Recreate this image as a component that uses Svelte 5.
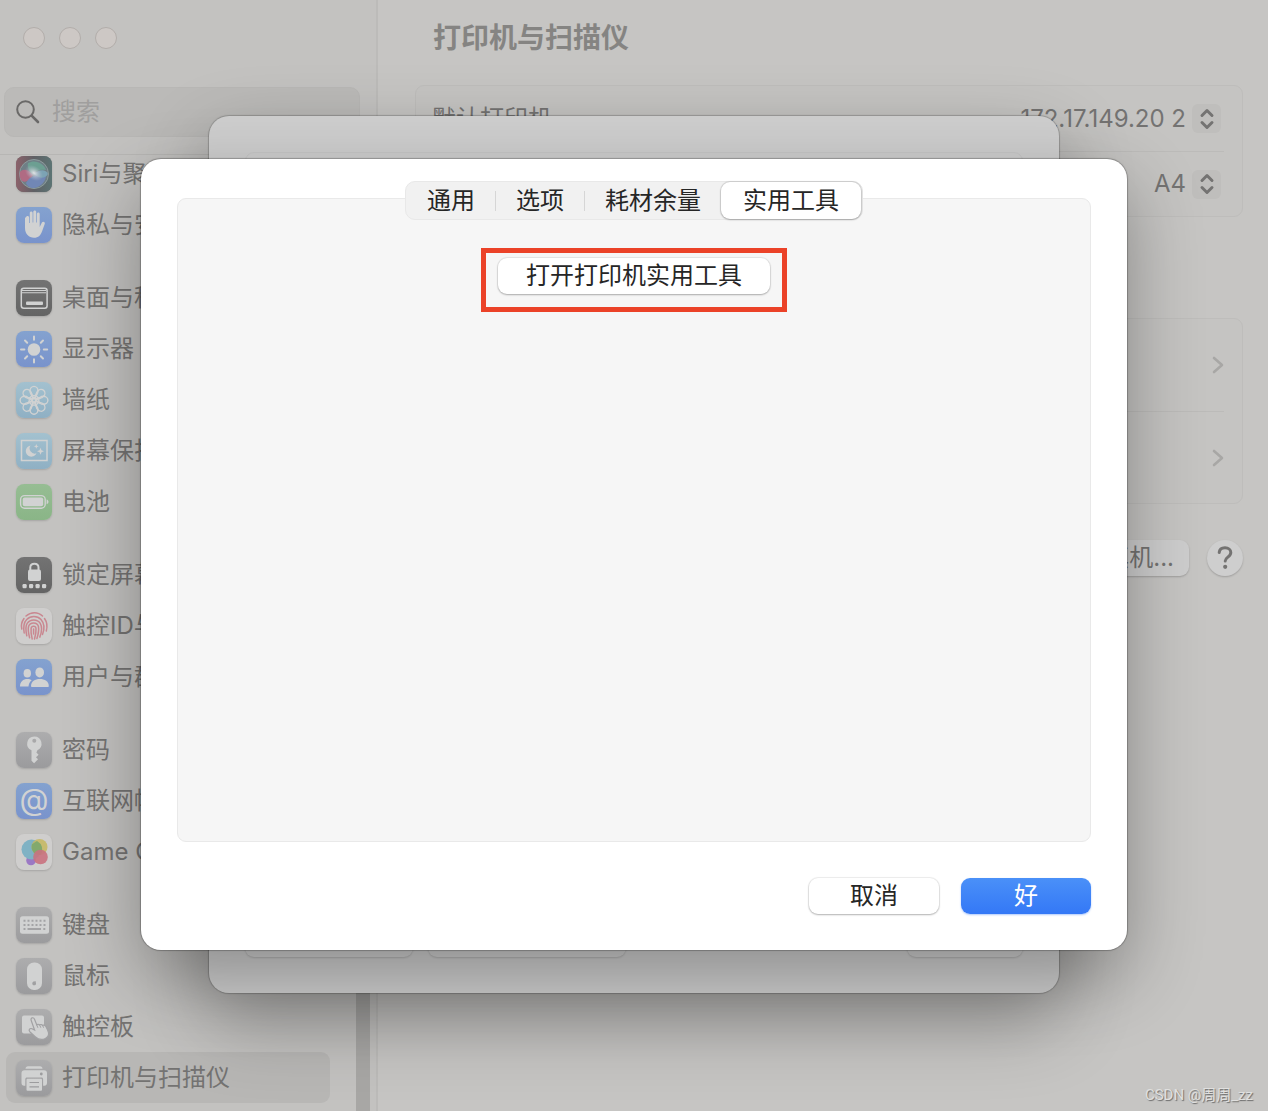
<script lang="ts">
    type Item = { label: string; icon: string; tone: string };

    const icons: Record<string, string> = {
        siri: `<defs>
                <linearGradient id="siri-bg" x1="0" y1="0" x2="1" y2="0"><stop offset="0" stop-color="#8c626b"/><stop offset="0.5" stop-color="#5f6064"/><stop offset="1" stop-color="#5c7474"/></linearGradient>
                <radialGradient id="siri-core"><stop offset="0" stop-color="#e2e4e6"/><stop offset="1" stop-color="#a9b4c4" stop-opacity="0"/></radialGradient>
            </defs>
            <rect width="36" height="36" rx="8" fill="url(#siri-bg)"/>
            <circle cx="18" cy="18" r="14.5" fill="#6f7f86" stroke="#8c9b9c"/>
            <path d="M4 16c4-5 10-1 13 3-3 6-8 8-11 6-2-2-3-6-2-9z" fill="#b06b83"/>
            <path d="M12 7c7-4 16 0 18 7-6-1-10 1-13 4-4-2-6-7-5-11z" fill="#6c9f92"/>
            <path d="M10 27c3-6 8-9 20-7-1 7-6 11-12 12-4 0-7-2-8-5z" fill="#7187b5"/>
            <path d="M18 18c5-5 12-5 14 0-3 5-9 5-14 0z" fill="#7ca3b4"/>
            <ellipse cx="18" cy="17" rx="10" ry="7" fill="url(#siri-core)" transform="rotate(35 18 17)"/>`,
        hand: `<path d="M9 10.500v10.500c0 6 4 9.700 9 9.700 4.600 0 6.800-2.700 8.100-6.500l2.700-7.500c.5-1.800-1.900-2.900-2.900-1.100l-2.200 4.300V7c0-2-2.800-2-2.800 0v8.500h-.7V5c0-2-2.900-2-2.900 0v10.500h-.7V6c0-2-2.800-2-2.800 0v10h-.7v-5.500c0-2-3.100-2-3.100 0z" fill="currentColor"/>`,
        desktop: `<rect x="5.300" y="8.200" width="25.800" height="20" rx="2.500" fill="none" stroke="currentColor" stroke-width="1.500"/><path d="M6 10h24v1H6zM6 12.200h24v1H6z" fill="currentColor"/><rect x="10" y="21.500" width="17" height="3.500" rx="1" fill="currentColor"/>`,
        sun: `<circle cx="18" cy="18.500" r="6.300" fill="currentColor"/><path d="M18 5.500v3.200M18 28.300v3.200M5 18.500h3.400M27.800 18.500h3.400M9 9.500l2.200 2.200M24.800 25.300l2.200 2.200M27 9.500l-2.200 2.200M11.200 25.300L9 27.500" stroke="currentColor" stroke-width="2" stroke-linecap="round"/>`,
        flower: `<g fill="none" stroke="currentColor" stroke-width="1.400">${[0, 45, 90, 135, 180, 225, 270, 315]
            .map((a) => `<g transform="rotate(${a} 18 18.300)"><ellipse cx="18" cy="9" rx="4" ry="4.600"/><path d="M15 12l3 4.500 3-4.500"/></g>`)
            .join('')}<circle cx="18" cy="18.300" r="2"/></g>`,
        saver: `<rect x="5.500" y="7.500" width="25.500" height="20" fill="none" stroke="currentColor" stroke-width="1.500"/><path d="M14.500 12.500a5.600 5.600 0 1 0 6 7.800 5.200 5.200 0 0 1-6-7.800z" fill="currentColor"/><path d="M20.300 11l.7 1.700 1.700.7-1.700.7-.7 1.700-.7-1.700-1.700-.7 1.700-.7zM24.500 14.800l1 2.500 2.500 1-2.500 1-1 2.500-1-2.500-2.500-1 2.500-1z" fill="currentColor"/>`,
        battery: `<rect x="4.600" y="11.600" width="24.600" height="12.600" rx="4" fill="none" stroke="currentColor" stroke-width="1.400"/><rect x="6.700" y="13.600" width="20.500" height="8.600" rx="2" fill="currentColor"/><path d="M30.600 15.600c2.500.6 2.500 4 0 4.600z" fill="currentColor"/>`,
        lock: `<rect x="12" y="12.500" width="13" height="11.500" rx="2" fill="currentColor"/><path d="M14.300 13v-2.500c0-5 8.200-5 8.200 0V13" fill="none" stroke="currentColor" stroke-width="2"/><g fill="currentColor"><rect x="6.500" y="27" width="4.200" height="4.200" rx="1.200"/><rect x="13" y="27" width="4.200" height="4.200" rx="1.200"/><rect x="19.500" y="27" width="4.200" height="4.200" rx="1.200"/><rect x="26" y="27" width="4.200" height="4.200" rx="1.200"/></g>`,
        finger: `<g fill="none" stroke="#c98790" stroke-width="1.500" stroke-linecap="round">
                <path d="M10 8c5-4.500 12-4.500 16.500 0M5.800 21c-1-4 0-7.500 2.200-10.500M28.500 10.500c2.500 3.500 3 8 1.800 12.500"/>
                <path d="M8.200 25c-1-6-1-10 2.500-13.500 4-4 10.500-4 14.300 0 3.500 4 3.500 10 1.500 15"/>
                <path d="M10.800 27.800c-1.500-7-1.500-10 .5-12.700 3-4.300 10-4.300 12.800 0 2.300 3.800 1.700 9-.3 14"/>
                <path d="M13.600 29.800c-1.500-6-1.800-9-1-11.500 1.500-4.500 8.500-4.500 9.800 0 .9 4-.2 8-1.500 12.200"/>
                <path d="M16.200 31c-1-4-1.500-7.500-1.100-10.700.5-2.700 4.500-2.700 4.900 0 .3 3.500-.4 7-1.500 10.700M17.600 21v5"/>
            </g>`,
        users: `<g fill="currentColor"><ellipse cx="11.300" cy="14.300" rx="3.700" ry="4.300"/><path d="M4 27.500c0-5 3.300-7.500 7.300-7.500 1.800 0 3.300.5 4.400 1.300-2 1.700-3 3.700-3.200 6.200z"/><ellipse cx="23.700" cy="13.400" rx="4.300" ry="5"/><path d="M15 27.300c0-5 4-7.300 8.900-7.300s8.900 2.300 8.900 7.300c0 .5-.5.700-1 .7H16c-.6 0-1-.2-1-.7z"/></g>`,
        key: `<path fill-rule="evenodd" d="M18.300 4.500a7.200 7.200 0 0 0-2.800 13.800v10.400l2.600 2.600 3.900-4-2-2 2.600-2.500-2.200-2.400 1-2.200A7.200 7.200 0 0 0 18.300 4.500zm0 2.200a2 2 0 1 1 0 4 2 2 0 0 1 0-4z" fill="currentColor"/>`,
        at: `<text x="18" y="27" text-anchor="middle" font-family="Inter, sans-serif" font-size="30" fill="currentColor">@</text>`,
        game: `<circle cx="15" cy="26.500" r="4.800" fill="#9b78c4"/><circle cx="15.500" cy="15.500" r="10" fill="#7fb2c4"/><circle cx="23.500" cy="13" r="8" fill="#c6b75e" fill-opacity="0.850"/><path d="M16 10.300a8 8 0 0 0 9 10.500A10 10 0 0 0 21 7z" fill="#82a96c"/><circle cx="24.500" cy="23" r="7.300" fill="#c9727f" fill-opacity="0.900"/>`,
        keyboard: `<rect x="4" y="9.300" width="29" height="17.500" rx="2.500" fill="currentColor"/><g stroke="#a3a3a5" stroke-width="1.900"><path d="M7.500 13.700h22M7.500 18h22" stroke-dasharray="2 2"/><path d="M7.500 22h2M11.500 22h13.500M27.300 22h2"/></g>`,
        mouse: `<rect x="11" y="4.500" width="15" height="27.500" rx="7" fill="currentColor"/><path d="M18.300 23.500c1.200-.6 1.800 0 1.500 1 .7 1.500-.3 3-1.200 2.700-1.200.5-2.500-.6-2.300-2.200.2-1 1-1.600 2-1.500z" fill="#a0a0a2"/>`,
        trackpad: `<rect x="6" y="6.500" width="22" height="18" rx="2" fill="currentColor"/><path d="M15.200 11.500c-1-2.700 2.300-3.800 3.300-1.300l2.200 5.600c.8-.8 2-.7 2.800.2.900-.8 2.300-.6 2.900.4 1.200-.7 2.800-.2 3.500 1.100l1.700 3.500c2 4.200.7 7-2.200 8.500-4.200 2-7.400.8-10.200-1.800l-5.400-5c-1.700-1.800.2-3.900 2.200-2.900l2.600 1.300z" fill="currentColor" stroke="#a1a1a3" stroke-width="1.200"/><path d="M20.700 15.800l1.200 3M23.800 16.200l1 2.500M26.700 16.600l.9 2.100" stroke="#a1a1a3"/>`,
        printer: `<g fill="currentColor"><path d="M9.500 8.800c0-1.500 1-2.500 2.500-2.500h12c1.500 0 2.500 1 2.500 2.500z"/><path d="M8.500 10.300h19.500c2 0 3 1 3 3v9.400c0 2-1 3-2.700 3h-1.200v-6.500c0-1-.6-1.700-1.700-1.700H11c-1 0-1.700.7-1.700 1.700v6.500H8.200c-1.800 0-2.700-1-2.700-3v-9.400c0-2 1-3 3-3z"/><rect x="10.500" y="18.800" width="15.500" height="12" rx="1"/></g><path d="M13.500 22.500h9.500M13.500 26.800h9.500" fill="none" stroke="#9c9c9e" stroke-width="1.200"/><circle cx="25.300" cy="14" r="1.400" fill="#9c9c9e"/>`,
    };

    const groups: Item[][] = [
        [
            { label: 'Siri与聚焦', icon: 'siri', tone: 'dark' },
            { label: '隐私与安全性', icon: 'hand', tone: 'blue' },
        ],
        [
            { label: '桌面与程序坞', icon: 'desktop', tone: 'dark' },
            { label: '显示器', icon: 'sun', tone: 'blue' },
            { label: '墙纸', icon: 'flower', tone: 'cyan' },
            { label: '屏幕保护程序', icon: 'saver', tone: 'cyan' },
            { label: '电池', icon: 'battery', tone: 'green' },
        ],
        [
            { label: '锁定屏幕', icon: 'lock', tone: 'dark' },
            { label: '触控ID与密码', icon: 'finger', tone: 'light' },
            { label: '用户与群组', icon: 'users', tone: 'blue' },
        ],
        [
            { label: '密码', icon: 'key', tone: 'gray' },
            { label: '互联网帐户', icon: 'at', tone: 'blue' },
            { label: 'Game Center', icon: 'game', tone: 'light' },
        ],
        [
            { label: '键盘', icon: 'keyboard', tone: 'gray' },
            { label: '鼠标', icon: 'mouse', tone: 'gray' },
            { label: '触控板', icon: 'trackpad', tone: 'gray' },
            { label: '打印机与扫描仪', icon: 'printer', tone: 'gray' },
        ],
    ];

    const defaults = [
        { id: 'printer', label: '默认打印机', value: '172.17.149.20 2' },
        { id: 'paper', label: '默认纸张大小', value: 'A4' },
    ];
    const printers = ['172.17.149.20', '172.17.149.20 2'];
    const tabs = ['通用', '选项', '耗材余量', '实用工具'];

    let current = $state('打印机与扫描仪');
    let activeTab = $state('实用工具');
    let query = $state('');
</script>

<div class="window">
    <aside class="sidebar">
        <div class="sidebar__head">
            <div class="lights">
                <button class="lights__dot" aria-label="关闭"></button>
                <button class="lights__dot" aria-label="最小化"></button>
                <button class="lights__dot" aria-label="缩放"></button>
            </div>
            <label class="search">
                <svg width="24" height="24" viewBox="0 0 24 24" fill="none" stroke="currentColor" stroke-linecap="round">
                    <circle cx="9.500" cy="9.500" r="8.300" stroke-width="2" />
                    <path d="M15.600 15.600l6.400 6.400" stroke-width="2.600" />
                </svg>
                <input class="search__input" type="text" placeholder="搜索" aria-label="搜索" bind:value={query} />
            </label>
        </div>
        <nav class="nav">
            {#each groups as group}
                <ul class="nav__group">
                    {#each group as item}
                        <li>
                            <button
                                class="nav__item"
                                class:nav__item--active={item.label === current}
                                onclick={() => (current = item.label)}
                            >
                                <span class="icon icon--{item.tone}">
                                    <svg width="36" height="36" viewBox="0 0 36 36" aria-hidden="true">{@html icons[item.icon]}</svg>
                                </span>
                                <span>{item.label}</span>
                            </button>
                        </li>
                    {/each}
                </ul>
            {/each}
        </nav>
        <div class="scrollbar"></div>
    </aside>

    <main class="content">
        <h1 class="content__title">打印机与扫描仪</h1>
        <section class="card">
            {#each defaults as row}
                <div class="row">
                    <label for={row.id}>{row.label}</label>
                    <div class="popup">
                        <select id={row.id} class="popup__select">
                            <option>{row.value}</option>
                        </select>
                        <span class="popup__arrows">
                            <svg width="16" height="22" viewBox="0 0 16 22" fill="none" stroke="currentColor" stroke-width="3" stroke-linecap="round" stroke-linejoin="round" aria-hidden="true">
                                <path d="M3 7.500l5-5 5 5M3 14.500l5 5 5-5" />
                            </svg>
                        </span>
                    </div>
                </div>
            {/each}
        </section>
        <section class="card card--printers">
            {#each printers as printer}
                <button class="printer" aria-label={printer}>
                    <svg width="12" height="18" viewBox="0 0 12 18" fill="none" stroke="currentColor" stroke-width="2.600" stroke-linecap="round" stroke-linejoin="round" aria-hidden="true">
                        <path d="M2 2l8 7-8 7" />
                    </svg>
                </button>
            {/each}
        </section>
        <div class="content__actions">
            <button class="muted-btn">添加打印机、扫描仪或传真机...</button>
            <button class="help" aria-label="帮助">
                <svg width="18" height="26" viewBox="0 0 18 26" aria-hidden="true">
                    <path d="M3.200 7.500C3.500 4.300 5.800 2.800 9 2.800c3.400 0 5.800 1.800 5.800 4.700 0 4.600-5.600 4.500-5.600 8.500" fill="none" stroke="currentColor" stroke-width="3" stroke-linecap="round" />
                    <circle cx="9.200" cy="21.800" r="2.100" fill="currentColor" />
                </svg>
            </button>
        </div>
    </main>

    <!-- printer sheet, mostly covered by the options dialog -->
    <div class="sheet">
        <div class="sheet__panel"></div>
        <div class="sheet__footer">
            <span class="sheet__btn sheet__btn--medium"></span>
            <span class="sheet__btn sheet__btn--wide"></span>
            <span class="sheet__btn sheet__btn--last"></span>
        </div>
    </div>

    <div class="dialog" role="dialog" aria-label="打印机选项">
        <div class="tabs" role="tablist">
            {#each tabs as tab}
                <button
                    class="tabs__tab"
                    class:tabs__tab--active={tab === activeTab}
                    role="tab"
                    aria-selected={tab === activeTab}
                    onclick={() => (activeTab = tab)}
                >{tab}</button>
            {/each}
        </div>
        <div class="panel" role="tabpanel">
            <div class="highlight">
                <button class="btn btn--utility">打开打印机实用工具</button>
            </div>
        </div>
        <div class="dialog__footer">
            <button class="btn">取消</button>
            <button class="btn btn--primary">好</button>
        </div>
    </div>

    <span class="watermark">CSDN @周周_zz</span>
</div>

<style>
    :global(body) {
        margin: 0;
        background: #c6c5c3;
    }

    .window {
        position: relative;
        display: grid;
        grid-template-columns: 378px 1fr;
        min-height: 100vh;
        overflow: hidden;
        background: #c6c5c3;
        color: #747372;
        font-family: Inter, "Noto Sans CJK SC", sans-serif;
        font-size: 24px;
        line-height: 32px;
    }

    .window * {
        box-sizing: border-box;
    }

    button, input, select {
        margin: 0;
        padding: 0;
        border: none;
        background: none;
        color: inherit;
        font: inherit;
    }

    .sidebar {
        position: relative;
        background: #c3c2c0;
        border-right: 2px solid #bcbbb9;
    }

    .sidebar__head {
        height: 155px;
        padding: 27px 16px 0 4px;
        border-bottom: 1px solid #b7b6b4;
    }

    .lights {
        display: flex;
        gap: 14px;
        padding-left: 19px;
    }

    .lights__dot {
        width: 22px;
        height: 22px;
        border: 1px solid #b2adaa;
        border-radius: 50%;
        background: #cdc8c5;
    }

    .search {
        display: flex;
        align-items: center;
        gap: 12px;
        height: 50px;
        margin-top: 38px;
        padding: 0 11px;
        border: 1px solid #b8b7b5;
        border-radius: 10px;
        background: #bbbab8;
    }

    .search svg {
        flex: none;
        color: #6a6968;
    }

    .search__input {
        flex: 1;
        min-width: 0;
        outline: none;
    }

    .search__input::placeholder {
        color: #a09f9e;
        opacity: 1;
    }

    .nav {
        display: flex;
        flex-direction: column;
        gap: 22px;
        margin-top: -7px;
        padding: 0 46px 8px 6px;
    }

    .nav__group {
        margin: 0;
        padding: 0;
        list-style: none;
    }

    .nav__item {
        display: flex;
        align-items: center;
        gap: 10px;
        width: 100%;
        height: 51px;
        padding: 0 10px;
        border-radius: 9px;
        text-align: left;
        white-space: nowrap;
    }

    .nav__item--active {
        background: #b8b7b5;
    }

    .icon {
        flex: none;
        width: 36px;
        height: 36px;
        border-radius: 8px;
        box-shadow: 0 1px 2px rgba(0, 0, 0, 0.15);
        color: #d1d2d2;
    }

    .icon svg {
        display: block;
    }

    .icon--dark {
        background: linear-gradient(#737373, #646464);
    }

    .icon--blue {
        background: linear-gradient(#84a2cf, #7993cc);
    }

    .icon--cyan {
        background: linear-gradient(#a3c1cf, #8fb0c4);
    }

    .icon--green {
        background: linear-gradient(#96bd93, #8ab587);
    }

    .icon--gray {
        background: linear-gradient(#adadae, #9b9b9d);
    }

    .icon--light {
        background: #cfcecd;
    }

    .scrollbar {
        position: absolute;
        top: 420px;
        right: 6px;
        bottom: 0;
        width: 14px;
        background: #a8a7a5;
    }

    .content {
        padding: 20px 25px 0 37px;
    }

    .content__title {
        margin: 0 0 29px;
        padding-left: 18px;
        color: #858482;
        font-size: 28px;
        font-weight: 700;
        line-height: 36px;
    }

    .card {
        padding: 0 18px 0 16px;
        border: 1px solid #bebdbb;
        border-radius: 9px;
        background: #c5c4c2;
    }

    .card--printers {
        margin-top: 101px;
    }

    .row {
        display: flex;
        align-items: center;
        justify-content: space-between;
        height: 65px;
        padding-right: 3px;
    }

    .row + .row {
        border-top: 1px solid #bcbbb9;
    }

    .popup {
        position: relative;
        display: flex;
        align-items: center;
    }

    .popup__select {
        appearance: none;
        padding-right: 35px;
        text-align: right;
        outline: none;
    }

    .popup__arrows {
        position: absolute;
        right: 0;
        display: flex;
        align-items: center;
        justify-content: center;
        width: 29px;
        height: 29px;
        border-radius: 6px;
        background: #bfbebc;
        pointer-events: none;
    }

    .printer {
        display: flex;
        align-items: center;
        justify-content: flex-end;
        width: 100%;
        height: 92px;
        color: #a8a7a5;
    }

    .printer + .printer {
        border-top: 1px solid #bcbbb9;
    }

    .content__actions {
        display: flex;
        justify-content: flex-end;
        align-items: center;
        gap: 18px;
        margin-top: 36px;
    }

    .muted-btn {
        height: 36px;
        padding: 0 15px;
        border-radius: 9px;
        background: #cecece;
        box-shadow: 0 1px 2px rgba(0, 0, 0, 0.2);
        white-space: nowrap;
    }

    .help {
        display: flex;
        align-items: center;
        justify-content: center;
        width: 36px;
        height: 36px;
        border-radius: 50%;
        background: #cecece;
        box-shadow: 0 1px 2px rgba(0, 0, 0, 0.2);
    }

    .sheet, .dialog {
        position: absolute;
        display: flex;
        flex-direction: column;
    }

    .sheet {
        inset: 116px 209px 118px;
        padding: 36px;
        border-radius: 20px;
        background: #cecece;
        box-shadow: 0 0 1px 1px rgba(0, 0, 0, 0.2), 0 28px 76px rgba(0, 0, 0, 0.3);
    }

    .sheet__panel {
        flex: 1;
        margin-bottom: 36px;
        border: 1px solid #c6c6c6;
        border-radius: 9px;
    }

    .sheet__footer {
        display: flex;
        gap: 15px;
    }

    .sheet__btn {
        height: 36px;
        border-radius: 9px;
        background: #cfcfcf;
        box-shadow: 0 1px 2px rgba(0, 0, 0, 0.15);
    }

    .sheet__btn--medium {
        width: 168px;
    }

    .sheet__btn--wide {
        width: 198px;
    }

    .sheet__btn--last {
        width: 116px;
        margin-left: auto;
    }

    .dialog {
        inset: 159px 141px 161px;
        padding: 22px 36px 36px;
        border-radius: 20px;
        background: #fff;
        box-shadow: 0 0 1px 1px rgba(0, 0, 0, 0.25), 0 28px 76px rgba(0, 0, 0, 0.32);
        color: #262626;
    }

    .tabs {
        z-index: 1;
        display: flex;
        align-self: center;
        align-items: center;
        height: 39px;
        padding: 0 1px;
        border: 1px solid #e8e8e8;
        border-radius: 10px;
        background: #f1f1f1;
    }

    .tabs__tab {
        height: 37px;
        padding: 0 20px;
    }

    /* short separators between the inactive tabs */
    .tabs__tab:nth-child(-n + 2) {
        padding-right: 21px;
        background: linear-gradient(#d6d6d6, #d6d6d6) right center / 1px 20px no-repeat;
    }

    .tabs__tab--active {
        padding: 0 22px;
        border-radius: 9px;
        background: #fff;
        box-shadow: 0 0 1px 1px rgba(0, 0, 0, 0.12), 0 1px 2px rgba(0, 0, 0, 0.2);
    }

    .panel {
        flex: 1;
        display: flex;
        justify-content: center;
        align-items: flex-start;
        margin-top: -22px;
        padding-top: 49px;
        border: 1px solid #e9e9e9;
        border-radius: 9px;
        background: #f6f6f6;
    }

    .highlight {
        padding: 5px 12px 13px;
        border: 5px solid #eb4228;
    }

    .btn {
        min-width: 130px;
        height: 36px;
        border-radius: 9px;
        background: #fff;
        box-shadow: 0 0 1px 1px rgba(0, 0, 0, 0.07), 0 1px 2px rgba(0, 0, 0, 0.25);
    }

    .btn--utility {
        padding: 0 28px;
    }

    .btn--primary {
        background: linear-gradient(#4a90f8, #3478f6);
        box-shadow: 0 1px 2px rgba(52, 120, 246, 0.4);
        color: #fff;
    }

    .dialog__footer {
        display: flex;
        justify-content: flex-end;
        gap: 22px;
        margin-top: 36px;
    }

    .watermark {
        position: absolute;
        right: 15px;
        bottom: 6px;
        color: #e0e0df;
        font-family: Roboto, "Noto Sans CJK SC", sans-serif;
        font-size: 15px;
        line-height: 20px;
        text-shadow: 1px 1px 1px #6c6c6c;
    }
</style>
